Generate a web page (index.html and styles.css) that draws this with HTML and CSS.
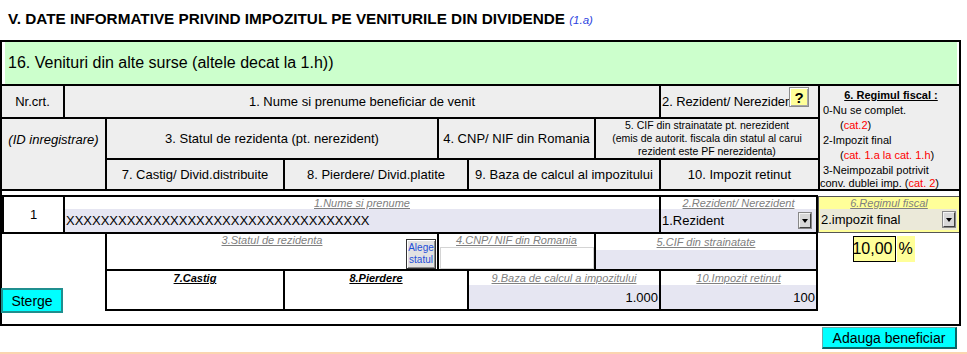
FILE: index.html
```html
<!DOCTYPE html>
<html lang="ro">
<head>
<meta charset="UTF-8">
<meta name="viewport" content="width=device-width, initial-scale=1.0">
<title>Venituri din dividende</title>
<link rel="stylesheet" href="styles.css">
</head>
<body>

<div class="title">V. DATE INFORMATIVE PRIVIND IMPOZITUL PE VENITURILE DIN DIVIDENDE <span class="ref">(1.a)</span></div>

<div class="section">
  <div class="section-head">16. Venituri din alte surse (altele decat la 1.h))</div>

  <!-- header of the table -->
  <div class="grid head">
    <div class="cell h-nr">Nr.crt.</div>
    <div class="cell h-nume bl">1. Nume si prenume beneficiar de venit</div>
    <div class="cell h-rez bl">
      <span class="clip">2. Rezident/ Nereziden</span>
      <button class="help">?</button>
    </div>
    <div class="cell h-regim bl">
      <div class="regim-title">6. Regimul fiscal :</div>
      <div>0-Nu se complet.</div>
      <div class="ind">(<span class="red">cat.2</span>)</div>
      <div>2-Impozit final</div>
      <div class="ind">(<span class="red">cat. 1.a la cat. 1.h</span>)</div>
      <div class="l6">3-Neimpozabil potrivit</div>
      <div class="l7">conv. dublei imp. (<span class="red">cat. 2</span>)</div>
    </div>
    <div class="cell h-id"><i>(ID inregistrare)</i></div>
    <div class="cell h-stat bl">3. Statul de rezidenta (pt. nerezident)</div>
    <div class="cell h-cnp bl">4. CNP/ NIF din Romania</div>
    <div class="cell h-cif bl">5. CIF din strainatate pt. nerezident<br>(emis de autorit. fiscala din statul al carui<br>rezident este PF nerezidenta)</div>
    <div class="cell h-castig bl">7. Castig/ Divid.distribuite</div>
    <div class="cell h-pierd bl">8. Pierdere/ Divid.platite</div>
    <div class="cell h-baza bl">9. Baza de calcul al impozitului</div>
    <div class="cell h-imp bl">10. Impozit retinut</div>
  </div>

  <!-- one beneficiary -->
  <div class="data">
    <div class="grid rows">
      <div class="d-nr r1">1</div>
      <div class="fld d-nume r1 bl">
        <div class="lbl">1.Nume si prenume</div>
        <div class="val">XXXXXXXXXXXXXXXXXXXXXXXXXXXXXXXXXXX</div>
      </div>
      <div class="fld d-rez r1 bl br">
        <div class="lbl">2.Rezident/ Nerezident</div>
        <div class="val sel">1.Rezident <span class="arrow"></span></div>
      </div>
      <div class="fld d-regim">
        <div class="lbl">6.Regimul fiscal</div>
        <div class="val sel beige">2.impozit final <span class="arrow"></span></div>
      </div>

      <div class="fld d-stat bl bb">
        <div class="lbl l2">3.Statul de rezidenta</div>
        <div class="val white"></div>
        <button class="alege">Alege<br>statul</button>
      </div>
      <div class="fld d-cnp bl bb">
        <div class="lbl l2">4.CNP/ NIF din Romania</div>
        <div class="val boxed"></div>
      </div>
      <div class="fld d-cif bl bb br">
        <div class="lbl l2b">5.CIF din strainatate</div>
        <div class="val"></div>
      </div>
      <div class="d-rata">
        <div class="pct">10,00</div>
        <div class="pct-sign">%</div>
      </div>

      <div class="d-sterge"><button class="cyan sterge">Sterge</button></div>
      <div class="fld d-castig bl bb">
        <div class="lbl l3 strong">7.Castig</div>
        <div class="val white"></div>
      </div>
      <div class="fld d-pierd bl bb">
        <div class="lbl l3 strong">8.Pierdere</div>
        <div class="val white"></div>
      </div>
      <div class="fld d-baza bl bb">
        <div class="lbl l3">9.Baza de calcul a impozitului</div>
        <div class="val num">1.000</div>
      </div>
      <div class="fld d-imp bl bb br">
        <div class="lbl l3">10.Impozit retinut</div>
        <div class="val num">100</div>
      </div>
    </div>
  </div>
</div>

<div class="actions">
  <button class="cyan add">Adauga beneficiar</button>
</div>
<div class="rule"></div>

</body>
</html>
```

FILE: styles.css
```css
body {
  margin: 0;
  width: 967px;
  font-family: "Liberation Sans", Arial, sans-serif;
  color: #000;
  background: #fff;
}
button {
  font-family: inherit;
  color: #000;
  cursor: pointer;
  padding: 0;
}

.title {
  height: 40px;
  box-sizing: border-box;
  padding: 10px 0 0 8px;
  font-size: 15.3px;
  line-height: 18px;
  font-weight: bold;
}
.title .ref {
  font-size: 11.5px;
  font-weight: normal;
  font-style: italic;
  color: #2b3fe0;
}

.section {
  width: 957px;
  border: 2px solid #000;
}
.section-head {
  height: 42px;
  margin: 0 2px 0 3px;
  padding-left: 3px;
  background: #ccffcc;
  font-size: 16px;
  display: flex;
  align-items: center;
}

/* shared column layout */
.grid {
  display: grid;
  grid-template-columns: 61px 42px 178px 154px 30px 127px 65px 159px 141px;
}
.bl { border-left: 2px solid #000; }
.br { border-right: 2px solid #000; }
.bb { border-bottom: 2px solid #000; }

/* header */
.head {
  border-top: 2px solid #000;
  grid-template-rows: 33px 41px 31px;
}
.head .cell {
  background: #eeeeee;
  border-bottom: 2px solid #000;
  font-size: 13px;
  display: flex;
  align-items: center;
  justify-content: center;
  text-align: center;
}
.h-nr { grid-column: 1; grid-row: 1; }
.h-nume { grid-column: 2 / 8; grid-row: 1; }
.h-rez { grid-column: 8; grid-row: 1; }
.h-regim { grid-column: 9; grid-row: 1 / 4; }
.h-id { grid-column: 1 / 3; grid-row: 2 / 4; }
.h-stat { grid-column: 3 / 5; grid-row: 2; }
.h-cnp { grid-column: 5 / 7; grid-row: 2; }
.h-cif { grid-column: 7 / 9; grid-row: 2; }
.h-castig { grid-column: 3; grid-row: 3; }
.h-pierd { grid-column: 4 / 6; grid-row: 3; }
.h-baza { grid-column: 6 / 8; grid-row: 3; }
.h-imp { grid-column: 8; grid-row: 3; }

.head .h-id {
  align-items: flex-start;
  padding-top: 13px;
}
.head .h-rez {
  position: relative;
  justify-content: flex-start;
  padding-left: 1px;
  white-space: nowrap;
}
.clip {
  letter-spacing: -0.1px;
}
.head .h-cif {
  font-size: 10.5px;
  line-height: 13px;
}
.help {
  position: absolute;
  top: 1px;
  right: 9px;
  width: 20px;
  height: 20px;
  background: #ffff99;
  border: 1px solid #8c8c8c;
  box-shadow: inset 1px 1px #fff, inset -1px -1px #a8a8a8;
  font-size: 15px;
  font-weight: bold;
}
.head .h-regim {
  display: block;
  text-align: left;
  font-size: 11px;
  line-height: 15px;
  padding: 2px 0 0 3px;
}
.regim-title {
  text-align: center;
  font-weight: bold;
  text-decoration: underline;
}
.ind { padding-left: 17px; }
.red { color: #ff0000; }
.l6 { line-height: 14px; }
.l7 { line-height: 12px; margin-left: -3px; }

/* data rows */
.data {
  padding: 4px 0 13px;
}
.rows {
  grid-template-rows: 39px 37px 40px;
}
.r1 {
  border-top: 2px solid #000;
  border-bottom: 2px solid #000;
}
.d-nr {
  grid-column: 1; grid-row: 1;
  border-left: 2px solid #000;
  font-size: 13px;
  display: flex;
  align-items: center;
  justify-content: center;
}
.d-nume { grid-column: 2 / 8; grid-row: 1; }
.d-rez { grid-column: 8; grid-row: 1; }
.d-regim { grid-column: 9; grid-row: 1; }
.d-stat { grid-column: 3 / 5; grid-row: 2; position: relative; }
.d-cnp { grid-column: 5 / 7; grid-row: 2; }
.d-cif { grid-column: 7 / 9; grid-row: 2; }
.d-rata { grid-column: 9; grid-row: 2; }
.d-sterge { grid-column: 1 / 3; grid-row: 3; }
.d-castig { grid-column: 3; grid-row: 3; }
.d-pierd { grid-column: 4 / 6; grid-row: 3; }
.d-baza { grid-column: 6 / 8; grid-row: 3; }
.d-imp { grid-column: 8; grid-row: 3; }

.fld {
  display: flex;
  flex-direction: column;
  min-width: 0;
}
.lbl {
  height: 12px;
  line-height: 12px;
  font-size: 11px;
  font-style: italic;
  text-decoration: underline;
  color: #808080;
  text-align: center;
  white-space: nowrap;
}
.lbl.l2 { height: 13px; line-height: 13px; }
.lbl.l2b { height: 16px; line-height: 16px; }
.lbl.l3 { height: 14px; line-height: 14px; }
.lbl.strong { color: #000; font-weight: bold; }

.val {
  flex: 1;
  background: #e6e6f2;
  font-size: 13px;
  display: flex;
  align-items: center;
  padding: 0 1px;
  white-space: nowrap;
  overflow: hidden;
}
.val.num { justify-content: flex-end; }
.val.white { background: none; }
.val.boxed {
  background: #fff;
  border: 1px solid #d4d4d4;
  margin-left: 1px;
}
.sel { padding-right: 5px; }
.arrow {
  margin-left: auto;
  width: 12px;
  height: 15px;
  box-sizing: border-box;
  background: #d8d8d8;
  border: 1px solid;
  border-color: #f4f4f4 #404040 #404040 #f4f4f4;
  box-shadow: 0 0 0 1px #888;
  display: flex;
  align-items: center;
  justify-content: center;
}
.arrow::after {
  content: "";
  border-left: 3px solid transparent;
  border-right: 3px solid transparent;
  border-top: 4px solid #000;
}

.d-regim {
  margin: 1px 0 1px;
  background: #ffff99;
  border: 1px solid #555;
  border-right: none;
}
.val.beige {
  background: #ebe9d9;
  margin: 0 2px 2px 1px;
  padding-right: 2px;
}

.alege {
  position: absolute;
  top: 5px;
  right: 1px;
  width: 30px;
  height: 30px;
  background: #e2e2e2;
  border: 1px solid #333;
  box-shadow: inset 1px 1px #fff, inset -1px -1px #8a8a8a;
  color: #1f4fd8;
  font-size: 10px;
  line-height: 12px;
}

.d-rata {
  display: flex;
  justify-content: center;
  align-items: flex-start;
  gap: 1px;
  padding: 2px 10px 0 0;
}
.pct {
  width: 43px;
  height: 26px;
  box-sizing: border-box;
  border: 1px solid #000;
  background: #ffff99;
  font-size: 16px;
  display: flex;
  align-items: center;
  justify-content: flex-end;
  padding-right: 2px;
}
.pct-sign {
  width: 18px;
  height: 26px;
  box-sizing: border-box;
  background: #ffff99;
  font-size: 16px;
  display: flex;
  align-items: center;
  padding-left: 2px;
}

.d-sterge {
  display: flex;
  align-items: flex-end;
}
.cyan {
  background: #00ffff;
  border: 1px solid #6aa;
  border-right: 2px solid #0a6666;
  border-bottom: 2px solid #0a6666;
  font-size: 14px;
}
.sterge {
  width: 62px;
  height: 25px;
  margin: 0 0 -2px -1px;
  border: 2px solid #1f8f8f;
}

.actions {
  width: 961px;
  display: flex;
  justify-content: flex-end;
  padding-top: 1px;
}
.add {
  width: 135px;
  height: 22px;
  margin-right: 4px;
}
.rule {
  margin-top: 3px;
  height: 2px;
  background: #fbd5b0;
}
```
